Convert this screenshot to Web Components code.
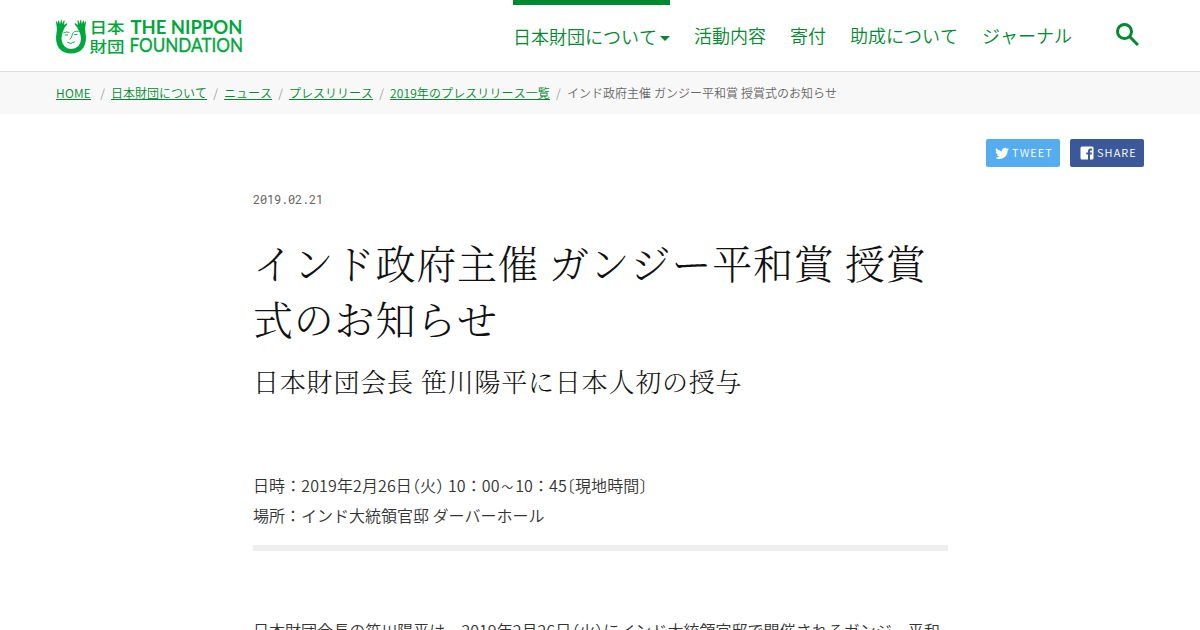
<!DOCTYPE html>
<html lang="ja">
<head>
<meta charset="utf-8">
<title>インド政府主催 ガンジー平和賞 授賞式のお知らせ | 日本財団</title>
<style>
    :root {
        --green: #00892f;
        --logo-green: #00a73c;
    }

    body {
        margin: 0;
        height: 630px;
        overflow: hidden;
        background: #fff;
        color: #333;
        font-family: "Noto Sans CJK JP", sans-serif;
        font-size: 16px;
        font-weight: 350;
        font-kerning: none;
    }
</style>
</head>
<body>
<press-page></press-page>

<script>
class SiteLogo extends HTMLElement {
    constructor() {
        super();
        this.attachShadow({ mode: 'open' });
        this.shadowRoot.innerHTML = `
            <style>
                :host { display: block; width: 188px; height: 36px; }
                svg { display: block; fill: var(--logo-green); }
                .kanji { font: 500 15px "Noto Sans CJK JP", sans-serif; }
                .en { font: 700 18.5px Lato, sans-serif; }
                .en.thin { font-weight: 400; stroke: var(--logo-green); stroke-width: .35; }
            </style>
            <svg width="188" height="36" viewBox="0 0 188 36">
                <path d="M1 10 L0 3 Q1 1 2 5 L2 2 Q3 0 4 5 L5 1 Q6 0 6 5 L8 1 Q9 1 8 6 L11 4 Q12 5 9 8 L7.500 11 Q5.500 15 5.500 20 Q6.500 29.500 15 30 Q24.500 29.500 25 20 Q25 15 22.500 11 L21 8 Q18 5 19 4 L22 6 Q21 1 22 1 L24 5 Q24 0 25 1 L26 5 Q27 0 28 2 L28 5 Q29 1 30 3 L29 10 L30 18 Q30 34 15 34.500 Q0 34 0 18Z"/>
                <g fill="none" stroke="#00a73c" stroke-width=".9" stroke-linecap="round">
                    <path d="M7.500 14 Q10 12 13 13.300"/>
                    <path d="M9 16 H11.500 M18.500 15.500 H21"/>
                    <path d="M22.500 12.300 Q17.500 11.500 16.500 15 Q16 18.500 14 20.300"/>
                    <path d="M11.500 23.500 Q15 25.800 18.500 23"/>
                </g>
                <text class="kanji" x="33.500" y="14" textLength="35" lengthAdjust="spacingAndGlyphs">日本</text>
                <text class="kanji" x="33.500" y="33" textLength="35" lengthAdjust="spacingAndGlyphs">財団</text>
                <text class="en" x="74.500" y="14.500" textLength="112" lengthAdjust="spacingAndGlyphs">THE NIPPON</text>
                <text class="en thin" x="73.500" y="33" textLength="113.500" lengthAdjust="spacingAndGlyphs">FOUNDATION</text>
            </svg>
        `;
    }
}
customElements.define('site-logo', SiteLogo);

class NavItem extends HTMLElement {
    constructor() {
        super();
        this.attachShadow({ mode: 'open' });
        this.shadowRoot.innerHTML = `
            <style>
                :host {
                    display: flex;
                    align-items: center;
                    box-sizing: border-box;
                    height: 71px;
                    color: var(--green);
                    font-size: 18px;
                    line-height: 27px;
                    white-space: nowrap;
                }
                :host([current]) { border-top: 5px solid var(--green); padding-bottom: 3px; }
                svg { display: none; margin: 3px 0 0 3px; }
                :host([current]) svg { display: block; }
            </style>
            <slot></slot>
            <svg width="10" height="5" viewBox="0 0 10 5"><path d="M0 0H10L5 5Z" fill="#00892f"/></svg>
        `;
    }
}
customElements.define('nav-item', NavItem);

class SiteHeader extends HTMLElement {
    constructor() {
        super();
        this.attachShadow({ mode: 'open' });
        this.shadowRoot.innerHTML = `
            <style>
                :host {
                    display: flex;
                    justify-content: space-between;
                    height: 71px;
                    padding: 0 61px 0 56px;
                    border-bottom: 1px solid #ddd;
                }
                site-logo { margin-top: 19px; }
                nav { display: flex; gap: 24px; }
                .search { margin: 23px 0 0 20px; }
            </style>
            <site-logo></site-logo>
            <nav>
                <nav-item current>日本財団について</nav-item>
                <nav-item>活動内容</nav-item>
                <nav-item>寄付</nav-item>
                <nav-item>助成について</nav-item>
                <nav-item>ジャーナル</nav-item>
                <svg class="search" width="23" height="23" viewBox="0 0 23 23" fill="none" stroke="#00892f" stroke-width="3">
                    <circle cx="8.500" cy="8.500" r="7"/>
                    <path d="M13.500 13.500L22 22"/>
                </svg>
            </nav>
        `;
    }
}
customElements.define('site-header', SiteHeader);

class BreadcrumbList extends HTMLElement {
    constructor() {
        super();
        this.attachShadow({ mode: 'open' });
        this.shadowRoot.innerHTML = `
            <style>
                :host {
                    display: flex;
                    align-items: center;
                    height: 42px;
                    padding: 0 56px;
                    background: #f8f8f8;
                    color: #666;
                    font-size: 12px;
                    line-height: 18px;
                }
                a { color: var(--green); text-decoration: underline; }
                a:first-of-type { letter-spacing: .22px; }
                a:last-of-type { letter-spacing: .1px; }
                i { width: 17px; text-align: center; color: #999; font-style: normal; }
                i:first-of-type { width: 20px; text-indent: 3px; }
                span { word-spacing: .4px; }
            </style>
        `;
        const items = ['HOME', '日本財団について', 'ニュース', 'プレスリリース', '2019年のプレスリリース一覧'];
        items.forEach((item) => {
            const link = document.createElement('a');
            link.href = '#';
            link.textContent = item;
            const slash = document.createElement('i');
            slash.textContent = '/';
            this.shadowRoot.append(link, slash);
        });
        const current = document.createElement('span');
        current.textContent = 'インド政府主催 ガンジー平和賞 授賞式のお知らせ';
        this.shadowRoot.append(current);
    }
}
customElements.define('breadcrumb-list', BreadcrumbList);

class ShareButton extends HTMLElement {
    constructor() {
        super();
        this.attachShadow({ mode: 'open' });
        const icons = {
            twitter: '<path fill="#fff" d="M14 3.200a6 6 0 0 1-1.600.4A2.800 2.800 0 0 0 13.600 2a6 6 0 0 1-1.800.7A2.850 2.850 0 0 0 7 5.300 8 8 0 0 1 1.200 2.300a2.850 2.850 0 0 0 .9 3.800A3 3 0 0 1 .8 5.700a2.850 2.850 0 0 0 2.300 2.800 3 3 0 0 1-1.300.1 2.850 2.850 0 0 0 2.700 2A5.800 5.800 0 0 1 .3 11.700 8.100 8.100 0 0 0 12.600 4.600 6 6 0 0 0 14 3.200Z"/>',
            facebook: '<path fill="#fff" d="M2 .5H12A1.500 1.500 0 0 1 13.500 2V12A1.500 1.500 0 0 1 12 13.500H10V8.500H11.700L12 6.500H10V5.300Q10 4.400 11 4.400H12V2.600H10.500Q8 2.600 8 5V6.500H6.300V8.500H8V13.500H2A1.500 1.500 0 0 1 .5 12V2A1.500 1.500 0 0 1 2 .5Z"/>'
        };
        this.shadowRoot.innerHTML = `
            <style>
                :host {
                    display: flex;
                    align-items: center;
                    box-sizing: border-box;
                    width: 74px;
                    height: 28px;
                    padding-left: 9px;
                    border-radius: 2px;
                    background: #55acee;
                    color: #fff;
                    font-size: 11px;
                    letter-spacing: 1.1px;
                    line-height: 26px;
                }
                :host([kind="facebook"]) { padding-left: 10px; background: #3b5998; }
                svg { flex: none; margin-right: 3px; }
                .label { height: 28px; }
            </style>
            <svg width="14" height="14" viewBox="0 0 14 14">${icons[this.getAttribute('kind')]}</svg>
            <div class="label"><slot></slot></div>
        `;
    }
}
customElements.define('share-button', ShareButton);

class PressArticle extends HTMLElement {
    constructor() {
        super();
        this.attachShadow({ mode: 'open' });
        this.shadowRoot.innerHTML = `
            <style>
                :host { display: block; width: 695px; margin: 22px 0 0 253px; }
                time {
                    display: block;
                    color: #666;
                    font: 12px/20px "Roboto Mono", "DejaVu Sans Mono", monospace;
                    letter-spacing: -.2px;
                }
                h1, h2 {
                    margin: 0;
                    color: #111;
                    font-family: "Noto Serif CJK JP", "Noto Serif JP", "Noto Sans CJK JP", serif;
                    font-weight: 300;
                    letter-spacing: .8px;
                }
                h1 { margin-top: 25px; font-size: 40px; line-height: 56px; word-spacing: -.7px; }
                h2 { margin-top: 15px; font-size: 26px; line-height: 39px; word-spacing: -.5px; }
                .info { margin: 70px 0 0; padding-bottom: 15px; border-bottom: 6px solid #eee; }
                p { margin: 0; line-height: 30px; }
                .lead { margin-top: 64px; white-space: nowrap; letter-spacing: .03px; }
                span { font-feature-settings: "halt"; }
                .num { letter-spacing: .11px; }
                .wave { display: inline-block; width: 15.500px; font-size: 12px; line-height: 16px; text-align: center; }
            </style>
            <time>2019.02.21</time>
            <h1>インド政府主催 ガンジー平和賞 授賞式のお知らせ</h1>
            <h2>日本財団会長 笹川陽平に日本人初の授与</h2>
            <div class="info">
                <p class="num">日時：2019年2月26日<span>（</span>火<span>）</span> 10：00<span class="wave">～</span>10：45<span>〔</span>現地時間<span>〕</span></p>
                <p>場所：インド大統領官邸 ダーバーホール</p>
            </div>
            <p class="lead">日本財団会長の笹川陽平は、2019年2月26日<span>（</span>火<span>）</span>にインド大統領官邸で開催されるガンジー平和</p>
        `;
    }
}
customElements.define('press-article', PressArticle);

class PressPage extends HTMLElement {
    constructor() {
        super();
        this.attachShadow({ mode: 'open' });
        this.shadowRoot.innerHTML = `
            <style>
                :host { display: block; }
                .share { display: flex; justify-content: flex-end; gap: 10px; padding: 25px 56px 0; }
            </style>
            <site-header></site-header>
            <breadcrumb-list></breadcrumb-list>
            <div class="share">
                <share-button kind="twitter">TWEET</share-button>
                <share-button kind="facebook">SHARE</share-button>
            </div>
            <press-article></press-article>
        `;
    }
}
customElements.define('press-page', PressPage);
</script>
</body>
</html>
